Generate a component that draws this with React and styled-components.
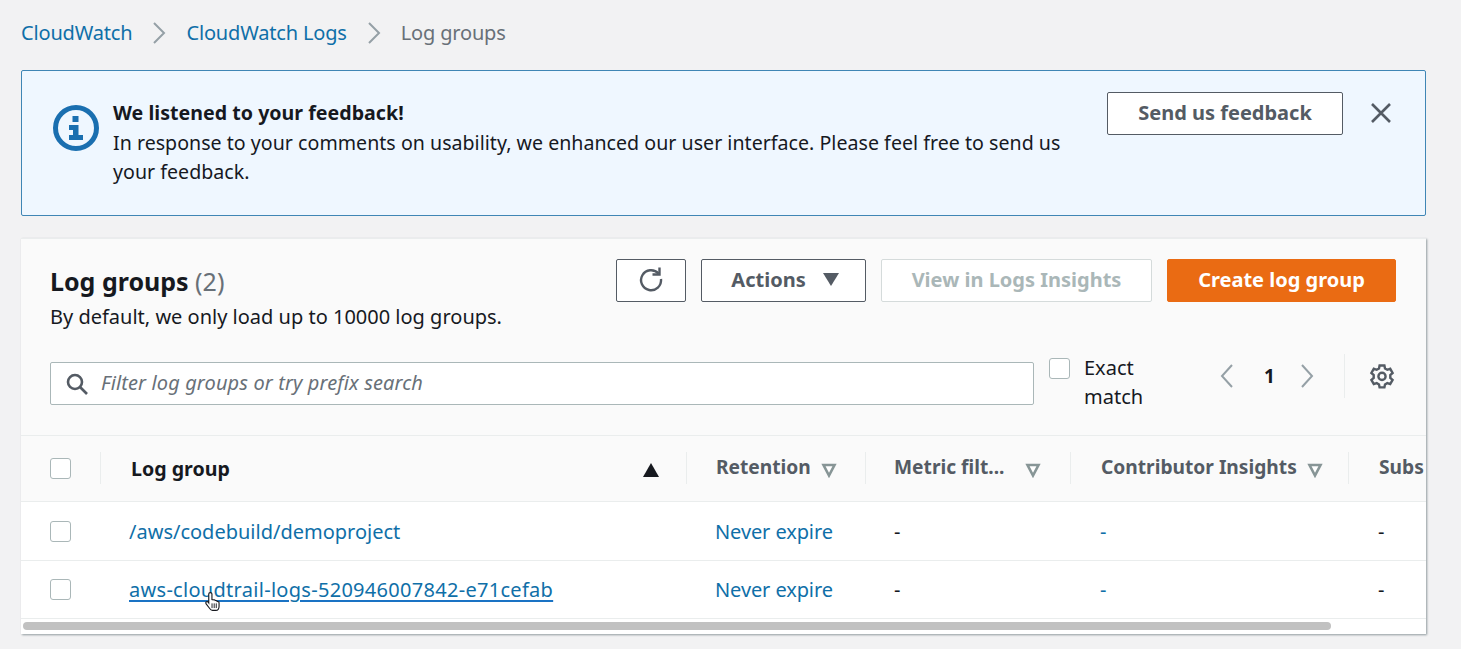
import React from "react";
import styled, { createGlobalStyle } from "styled-components";

const GlobalStyle = createGlobalStyle`
  html, body {
    margin: 0;
    padding: 0;
    background: #f2f2f3;
    height: 100%;
    overflow: hidden;
  }
  * {
    box-sizing: border-box;
  }
  body {
    font-family: "Noto Sans", "Open Sans", Arial, sans-serif;
    color: #16191f;
  }
`;

const Page = styled.div`
  width: 1461px;
  height: 649px;
  padding: 0 35px 0 21px;
  display: flex;
  flex-direction: column;
`;

const Crumbs = styled.nav`
  height: 70px;
  padding-bottom: 5px;
  display: flex;
  align-items: center;
  font-size: 20px;
  letter-spacing: -0.17px;
`;
const Crumb = styled.a`
  color: #0f6fa8;
`;
const CrumbNow = styled.span`
  color: #687078;
`;
const CrumbSep = styled.svg`
  width: 14px;
  height: 22px;
  margin: 0 20px;
  fill: none;
  stroke: #95a0a6;
  stroke-width: 2;
`;

const Alert = styled.div`
  height: 146px;
  border: 1px solid #3f86b5;
  border-radius: 2px;
  background: #eff7ff;
  padding: 21px 32px 0 30px;
  display: flex;
  align-items: flex-start;
  margin-bottom: 22px;
`;
const AlertIcon = styled.svg`
  width: 48px;
  height: 48px;
  margin: 12px 13px 0 0;
  flex: none;
`;
const AlertBody = styled.div`
  width: 960px;
  font-size: 19.6px;
  line-height: 29.5px;
  letter-spacing: 0.02px;
  margin-top: 6px;
`;
const AlertTitle = styled.div`
  font-weight: 700;
  font-size: 19.6px;
`;
const Spacer = styled.div`
  flex: 1;
`;
const Btn = styled.button`
  height: 43px;
  width: ${(p) => p.$w}px;
  background: ${(p) => (p.$primary ? "#ea6b13" : "#fff")};
  border: 1px solid ${(p) => (p.$primary ? "#ea6b13" : p.$disabled ? "#d5dbdb" : "#545b64")};
  border-radius: 2px;
  color: ${(p) => (p.$primary ? "#fff" : p.$disabled ? "#aab7b8" : "#545b64")};
  font-family: inherit;
  font-size: 20px;
  font-weight: 700;
  padding: 0 0 3px ${(p) => p.$pl || 0}px;
  display: flex;
  align-items: center;
  justify-content: center;
  gap: ${(p) => p.$gap || 0}px;
  flex: none;
`;
const CloseBtn = styled.svg`
  width: 24px;
  height: 24px;
  margin: 9px 0 0 26px;
  stroke: #545b64;
  stroke-width: 2.6;
  fill: none;
  flex: none;
`;

const Card = styled.section`
  flex: none;
  height: 396px;
  width: 1405px;
  background: #fff;
  box-shadow: 1px 1px 2px rgba(0, 28, 36, 0.4);
  border-top: 1px solid #eaeded;
  display: flex;
  flex-direction: column;
`;
const CardHead = styled.header`
  height: 197px;
  background: #fafafa;
  padding: 20px 30px 0 29px;
  border-bottom: 1px solid #eaeded;
`;
const TopRow = styled.div`
  display: flex;
  justify-content: space-between;
  height: 103px;
`;
const TitleBox = styled.div`
  padding-top: 5px;
`;
const Title = styled.h2`
  margin: 0;
  font-size: 25px;
  line-height: 34px;
  font-weight: 700;
`;
const Count = styled.span`
  font-weight: 400;
  color: #687078;
`;
const SubTitle = styled.p`
  margin: 7px 0 0;
  font-size: 20px;
  line-height: 24px;
`;
const Actions = styled.div`
  display: flex;
  gap: 15px;
  align-items: flex-start;
`;
const FilterRow = styled.div`
  display: flex;
  align-items: flex-start;
`;
const SearchBox = styled.div`
  width: 984px;
  height: 43px;
  background: #fff;
  border: 1px solid #aab7b8;
  border-radius: 2px;
  display: flex;
  align-items: center;
  padding-left: 14px;
  gap: 12px;
  font-size: 20px;
  font-style: italic;
  color: #687078;
  letter-spacing: 0.12px;
`;
const SearchText = styled.span`
  padding-bottom: 3px;
`;
const Check = styled.span`
  display: block;
  width: 21px;
  height: 21px;
  flex: none;
  background: #fff;
  border: 1.5px solid #aab7b8;
  border-radius: 3px;
`;
const Exact = styled.div`
  display: flex;
  margin: -4px 0 0 15px;
  width: 170px;
  gap: 14px;
  font-size: 20px;
  line-height: 29px;
`;
const ExactLabel = styled.span`
  margin-top: -5px;
`;
const Pager = styled.div`
  display: flex;
  align-items: center;
  height: 44px;
  margin-top: -8px;
  font-size: 19px;
  font-weight: 700;
`;
const PagerArrow = styled.svg`
  width: 16px;
  height: 26px;
  fill: none;
  stroke: #95a0a6;
  stroke-width: 2;
`;
const PageNum = styled.span`
  width: 64px;
  padding-left: 5px;
  text-align: center;
`;
const PagerEnd = styled.div`
  margin-left: 29px;
  padding-left: 24px;
  height: 44px;
  border-left: 1px solid #eaeded;
  display: flex;
  align-items: center;
`;

const Table = styled.div`
  flex: 1;
  overflow: hidden;
`;
const Row = styled.div`
  display: flex;
  width: 1500px;
  align-items: center;
  height: ${(p) => p.$h}px;
  background: ${(p) => (p.$head ? "#fafafa" : "#fff")};
  border-bottom: 1px solid #eaeded;
`;
const Cell = styled.div`
  width: ${(p) => p.$w}px;
  flex: none;
  height: 100%;
  display: flex;
  align-items: center;
  padding-left: ${(p) => p.$pl ?? 30}px;
  position: relative;
  font-size: 20px;
  letter-spacing: -0.1px;
`;
const HeadCell = styled(Cell)`
  font-weight: 700;
  font-size: ${(p) => (p.$dark ? 19.6 : 19.2)}px;
  letter-spacing: 0;
  color: ${(p) => (p.$dark ? "#16191f" : "#545b64")};
  padding-bottom: ${(p) => (p.$dark ? 0 : 4)}px;
  padding-right: 30px;
  white-space: nowrap;
  &::after {
    content: "";
    position: absolute;
    right: 0;
    top: 16px;
    height: 32px;
    border-right: 1px solid #eaeded;
  }
`;
const Caret = styled.svg`
  margin-left: ${(p) => p.$ml ?? 8}px;
  width: 16px;
  height: 16px;
  flex: none;
  margin-top: 7px;
`;
const SortUp = styled.svg`
  position: absolute;
  right: 28px;
  top: 27px;
  width: 16px;
  height: 14px;
`;
const Link = styled.a`
  color: #0f6fa8;
  letter-spacing: ${(p) => p.$ls ?? -0.1}px;
  text-decoration: ${(p) => (p.$under ? "underline" : "none")};
  text-decoration-color: #1a73c4;
  text-decoration-thickness: 2px;
  text-underline-offset: 3px;
`;
const Cursor = styled.svg`
  position: absolute;
  left: 104px;
  top: 31px;
  width: 15px;
  height: 19px;
`;
const ScrollTrack = styled.div`
  height: 15px;
  background: #fff;
  padding: 3px 0 0 2px;
`;
const Thumb = styled.div`
  width: 1308px;
  height: 8px;
  border-radius: 4px;
  background: #c1c1c1;
`;

const columns = [
  { w: 80, pl: 29 },
  { w: 586, label: "Log group" },
  { w: 179, label: "Retention", caretMl: 10, pl: 29 },
  { w: 205, label: "Metric filt...", caretMl: 21, pl: 28 },
  { w: 278, label: "Contributor Insights", caretMl: 10, pl: 30 },
  { w: 200, label: "Subs", pl: 30 },
];

const TriDown = ({ ml }) => (
  <Caret $ml={ml} viewBox="0 0 16 16">
    <path d="M2.500 3h11L8 13.500z" fill="#fff" stroke="#879596" strokeWidth="2.600" />
  </Caret>
);

const Refresh = () => (
  <svg width="28" height="28" viewBox="0 0 28 28" fill="none" stroke="#545b64" strokeWidth="2.400">
    <path d="M21.500 8.500A10 10 0 1 0 24 14" />
    <path d="M22.500 2.500v7h-7" />
  </svg>
);

const Gear = () => (
  <svg width="26" height="26" viewBox="0 0 26 26" fill="none" stroke="#545b64" strokeWidth="2.400">
    <path d="M10.600 2.500h4.800l.6 3 2.300 1.300 2.900-1 2.400 4.200-2.300 2v2.900l2.300 2-2.400 4.200-2.900-1-2.300 1.300-.6 3h-4.800l-.6-3-2.300-1.300-2.900 1-2.400-4.200 2.300-2V12l-2.300-2 2.400-4.200 2.900 1L10 5.500z" />
    <circle cx="13" cy="13.400" r="3.600" />
  </svg>
);

const rows = [
  { name: "/aws/codebuild/demoproject", h: 59, ls: 0 },
  { name: "aws-cloudtrail-logs-520946007842-e71cefab", h: 58, ls: 0.29, hover: true },
];

export default function App() {
  return (
    <Page>
      <GlobalStyle />
      <Crumbs>
        <Crumb>CloudWatch</Crumb>
        <CrumbSep viewBox="0 0 14 22">
          <path d="M2 1l10 10L2 21" />
        </CrumbSep>
        <Crumb>CloudWatch Logs</Crumb>
        <CrumbSep viewBox="0 0 14 22">
          <path d="M2 1l10 10L2 21" />
        </CrumbSep>
        <CrumbNow>Log groups</CrumbNow>
      </Crumbs>

      <Alert>
        <AlertIcon viewBox="0 0 48 48">
          <circle cx="24" cy="24" r="20.500" fill="none" stroke="#1a6fb0" strokeWidth="5" />
          <rect x="20.500" y="12" width="6" height="6" fill="#1a6fb0" />
          <path d="M17 21h9.500v10H31v5H17v-5h4v-5h-4z" fill="#1a6fb0" />
        </AlertIcon>
        <AlertBody>
          <AlertTitle>We listened to your feedback!</AlertTitle>
          In response to your comments on usability, we enhanced our user interface. Please feel free to send us your
          feedback.
        </AlertBody>
        <Spacer />
        <Btn $w={236}>Send us feedback</Btn>
        <CloseBtn viewBox="0 0 24 24">
          <path d="M3 3l18 18M21 3L3 21" />
        </CloseBtn>
      </Alert>

      <Card>
        <CardHead>
          <TopRow>
            <TitleBox>
              <Title>
                Log groups <Count>(2)</Count>
              </Title>
              <SubTitle>By default, we only load up to 10000 log groups.</SubTitle>
            </TitleBox>
            <Actions>
              <Btn $w={70}>
                <Refresh />
              </Btn>
              <Btn $w={165} $gap={17} $pl={3}>
                Actions
                <svg width="16" height="13" viewBox="0 0 16 13">
                  <path d="M0 0h16L8 13z" fill="#545b64" />
                </svg>
              </Btn>
              <Btn $w={271} $disabled>
                View in Logs Insights
              </Btn>
              <Btn $w={229} $primary>
                Create log group
              </Btn>
            </Actions>
          </TopRow>
          <FilterRow>
            <SearchBox>
              <svg width="24" height="24" viewBox="0 0 24 24" fill="none" stroke="#545b64" strokeWidth="2.600">
                <circle cx="10" cy="10" r="7" />
                <path d="M15 15l7 7" />
              </svg>
              <SearchText>Filter log groups or try prefix search</SearchText>
            </SearchBox>
            <Exact>
              <Check />
              <ExactLabel>
                Exact
                <br />
                match
              </ExactLabel>
            </Exact>
            <Pager>
              <PagerArrow viewBox="0 0 16 26">
                <path d="M13 2L3 13l10 11" />
              </PagerArrow>
              <PageNum>1</PageNum>
              <PagerArrow viewBox="0 0 16 26">
                <path d="M3 2l10 11L3 24" />
              </PagerArrow>
              <PagerEnd>
                <Gear />
              </PagerEnd>
            </Pager>
          </FilterRow>
        </CardHead>

        <Table>
          <Row $head $h={66}>
            <HeadCell $w={columns[0].w} $pl={columns[0].pl} $dark>
              <Check />
            </HeadCell>
            <HeadCell $w={columns[1].w} $dark>
              {columns[1].label}
              <SortUp viewBox="0 0 16 14">
                <path d="M8 0l8 14H0z" fill="#16191f" />
              </SortUp>
            </HeadCell>
            {columns.slice(2).map((c) => (
              <HeadCell key={c.label} $w={c.w} $pl={c.pl}>
                {c.label}
                {c.caretMl && <TriDown ml={c.caretMl} />}
              </HeadCell>
            ))}
          </Row>
          {rows.map((r) => (
            <Row key={r.name} $h={r.h}>
              <Cell $w={columns[0].w} $pl={columns[0].pl}>
                <Check />
              </Cell>
              <Cell $w={columns[1].w} $pl={28}>
                <Link $under={r.hover} $ls={r.ls}>
                  {r.name}
                </Link>
                {r.hover && (
                  <Cursor viewBox="0 0 16 20">
                    <path
                      d="M4 2C4 1 4.800.5 5.700.5S7.400 1 7.400 2V8L9 8.200C10 8 10.800 8.300 11 9C12 8.800 12.800 9.200 13 10C14.200 9.800 15 10.500 15 11.500V15C15 17.500 13.800 19.500 11.500 19.500H8C6.500 19.500 5.800 18.800 5 17.500L1.200 12.500C.6 11.700.8 10.800 1.500 10.300C2.200 9.900 3 10.200 3.500 10.800L4 11.500Z"
                      fill="#fff"
                      stroke="#16191f"
                      strokeWidth="1.200"
                    />
                    <path d="M7.500 12v5M9.800 12v5M12 12v5" stroke="#16191f" strokeWidth="1" />
                  </Cursor>
                )}
              </Cell>
              <Cell $w={columns[2].w} $pl={28}>
                <Link>Never expire</Link>
              </Cell>
              <Cell $w={columns[3].w} $pl={28}>
                -
              </Cell>
              <Cell $w={columns[4].w} $pl={29}>
                <Link>-</Link>
              </Cell>
              <Cell $w={columns[5].w} $pl={29}>
                -
              </Cell>
            </Row>
          ))}
        </Table>
        <ScrollTrack>
          <Thumb />
        </ScrollTrack>
      </Card>
    </Page>
  );
}
